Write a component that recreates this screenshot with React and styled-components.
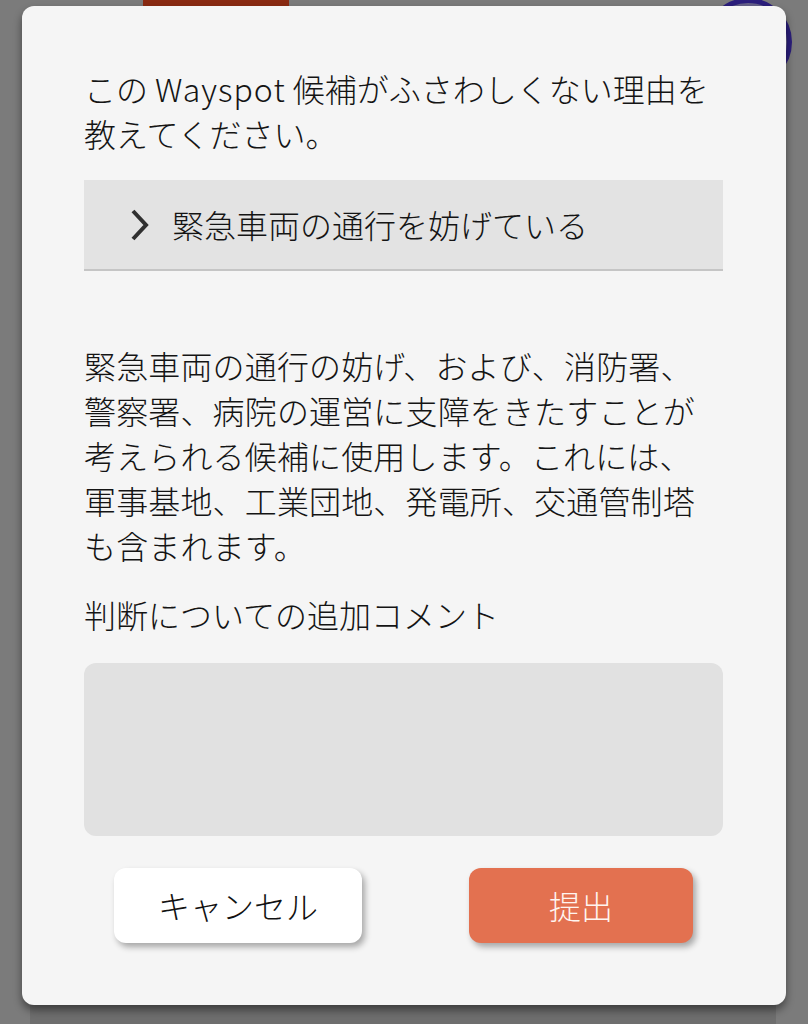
import React from "react";
import styled, { createGlobalStyle } from "styled-components";

const GlobalStyle = createGlobalStyle`
  html, body {
    margin: 0;
    padding: 0;
    background: #7b7b7b;
  }
  body {
    font-family: "Noto Sans CJK JP", "Noto Sans", sans-serif;
    -webkit-font-smoothing: antialiased;
  }
  * {
    box-sizing: border-box;
  }
`;

const Screen = styled.div`
  position: relative;
  width: 808px;
  height: 1024px;
  overflow: hidden;
  background: #7b7b7b;
`;

/* Page under the dimmed backdrop */
const TopBar = styled.div`
  display: flex;
  justify-content: space-between;
  align-items: flex-start;
  padding: 0 16px 0 143px;
  height: 94px;
`;

const BrandTab = styled.div`
  width: 146px;
  height: 60px;
  background: #8a2a12;
`;

const Avatar = styled.div`
  width: 88px;
  height: 88px;
  margin-top: -2px;
  border-radius: 50%;
  border: 5px solid #2b1e7c;
  background: #66628a;
`;

const BackCard = styled.div`
  margin: 0 32px 0 30px;
  height: 930px;
  background: #6e6e6e;
`;

/* Dialog */
const Overlay = styled.div`
  position: absolute;
  inset: 0;
  padding: 6px 22px;
`;

const Dialog = styled.div`
  background: #f5f5f5;
  border-radius: 12px;
  padding: 60px 63px 62px 62px;
  box-shadow: 0 5px 9px rgba(0, 0, 0, 0.45);
  color: #141414;
  font-size: 32px;
  font-weight: 300;
  line-height: 45px;
`;

const Title = styled.p`
  margin: 0 0 24px;
`;

const BrandName = styled.span`
  letter-spacing: 1px;
`;

const ReasonToggle = styled.button`
  display: flex;
  align-items: center;
  gap: 22px;
  width: 100%;
  height: 91px;
  padding: 0 0 0 46px;
  border: none;
  border-bottom: 2px solid #c5c5c5;
  background: #e3e3e3;
  color: #141414;
  font: inherit;
  text-align: left;
  cursor: pointer;
`;

const Chevron = styled.svg`
  flex: none;
  width: 20px;
  height: 34px;
`;

const Description = styled.p`
  margin: 72px 0 0;
  letter-spacing: 0.15px;
`;

const FieldLabel = styled.label`
  display: block;
  margin-top: 24px;
`;

const CommentBox = styled.textarea`
  display: block;
  width: 100%;
  height: 173px;
  margin-top: 26px;
  padding: 16px 20px;
  border: none;
  border-radius: 12px;
  background: #e1e1e1;
  color: #141414;
  font: inherit;
  resize: none;
  outline: none;
`;

const ButtonRow = styled.div`
  display: flex;
  justify-content: space-between;
  padding: 0 30px;
  margin-top: 32px;
`;

const ActionButton = styled.button`
  width: ${(p) => p.$width}px;
  height: 75px;
  border: none;
  border-radius: 12px;
  background: ${(p) => (p.$primary ? "#e37150" : "#ffffff")};
  color: ${(p) => (p.$primary ? "#fff5f0" : "#111111")};
  font: inherit;
  box-shadow: 3px 4px 6px rgba(0, 0, 0, 0.32);
  cursor: pointer;
`;

export default function App() {
  return (
    <>
      <GlobalStyle />
      <Screen>
        <TopBar>
          <BrandTab />
          <Avatar />
        </TopBar>
        <BackCard />
        <Overlay>
          <Dialog role="dialog">
            <Title>
              この <BrandName>Wayspot</BrandName> 候補がふさわしくない理由を教えてください。
            </Title>
            <ReasonToggle type="button">
              <Chevron viewBox="0 0 20 34">
                <polyline
                  points="3,3 16,17 3,31"
                  fill="none"
                  stroke="#303030"
                  strokeWidth="4"
                />
              </Chevron>
              緊急車両の通行を妨げている
            </ReasonToggle>
            <Description>
              緊急車両の通行の妨げ、および、消防署、警察署、病院の運営に支障をきたすことが考えられる候補に使用します。これには、軍事基地、工業団地、発電所、交通管制塔も含まれます。
            </Description>
            <FieldLabel htmlFor="comment">判断についての追加コメント</FieldLabel>
            <CommentBox id="comment" />
            <ButtonRow>
              <ActionButton type="button" $width={248}>
                キャンセル
              </ActionButton>
              <ActionButton type="button" $width={224} $primary>
                提出
              </ActionButton>
            </ButtonRow>
          </Dialog>
        </Overlay>
      </Screen>
    </>
  );
}
